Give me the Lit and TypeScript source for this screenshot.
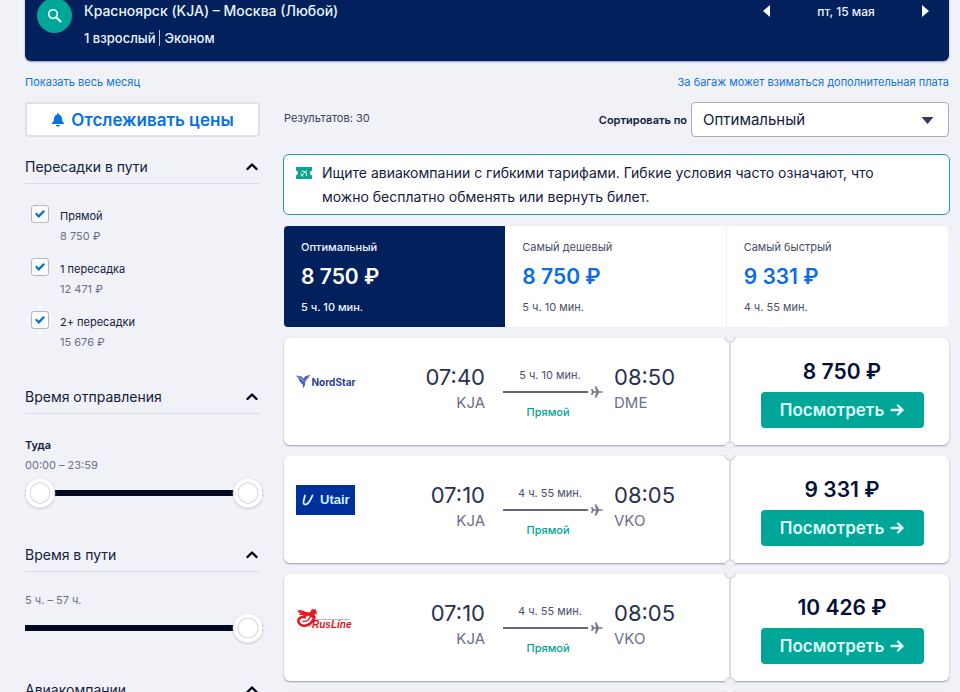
import { LitElement, html, css, svg, nothing } from "lit";
import { customElement, property, state } from "lit/decorators.js";
import { classMap } from "lit/directives/class-map.js";

interface Flight {
  airline: "nordstar" | "utair" | "rusline";
  depart: string;
  from: string;
  duration: string;
  arrive: string;
  to: string;
  price: string;
}

const FLIGHTS: Flight[] = [
  { airline: "nordstar", depart: "07:40", from: "KJA", duration: "5 ч. 10 мин.", arrive: "08:50", to: "DME", price: "8 750 ₽" },
  { airline: "utair", depart: "07:10", from: "KJA", duration: "4 ч. 55 мин.", arrive: "08:05", to: "VKO", price: "9 331 ₽" },
  { airline: "rusline", depart: "07:10", from: "KJA", duration: "4 ч. 55 мин.", arrive: "08:05", to: "VKO", price: "10 426 ₽" },
  { airline: "utair", depart: "07:10", from: "KJA", duration: "4 ч. 55 мин.", arrive: "08:05", to: "VKO", price: "10 426 ₽" },
];

const STOPS = [
  { id: "direct", label: "Прямой", price: "8 750 ₽" },
  { id: "one", label: "1 пересадка", price: "12 471 ₽" },
  { id: "more", label: "2+ пересадки", price: "15 676 ₽" },
];

const TABS = [
  { label: "Оптимальный", price: "8 750 ₽", time: "5 ч. 10 мин." },
  { label: "Самый дешевый", price: "8 750 ₽", time: "5 ч. 10 мин." },
  { label: "Самый быстрый", price: "9 331 ₽", time: "4 ч. 55 мин." },
];

const LOGOS = {
  nordstar: html`<svg class="logo" viewBox="0 0 60 30" role="img" aria-label="NordStar">
    ${svg`<path d="M0 8.500l5 .7 2.600 2.300L9.500 9l5.500-1.200-3 2.600 1.200.4-2.800 1.900.4.800-1.600 1.400-.3 3.500-1.700 2.800-.6-4-2.400-1.400 1.200-.3-3-1.700 1.400-.4z" fill="#4a63b8"/>
    <path d="M2 9.500l6 4.500M14 8.500l-5.500 6" stroke="#b8c6ea" stroke-width=".8"/>
    <text x="15.500" y="19" class="nord">NordStar</text>`}
  </svg>`,
  utair: html`<svg class="logo" viewBox="0 0 60 30" role="img" aria-label="Utair">
    ${svg`<path d="M0 0h59v30H0z" fill="#00309c"/>
    <path d="M9 10.500L7.700 15.500C6.900 18.700 8 19.800 10 19.400c2.800-.6 4.600-4.400 6.500-9" fill="none" stroke="#d4f2ff" stroke-width="1.800" stroke-linecap="round"/>
    <text x="24" y="19" class="utair">Utair</text>`}
  </svg>`,
  rusline: html`<svg class="logo" viewBox="0 0 60 30" role="img" aria-label="RusLine">
    ${svg`<path d="M1 6.500c4 .4 7 1.600 10.500 2.800 1.800.5 3-.2 3.700-1.300l-.6-1.500 1.600.5.600-1.500 1.300 1.300 1.600-1-.1 1.700 1.900.4-1.500 1.200 1.500 2.300-2.600-.6c-.8 1.400.6 3.200.4 5.600" fill="#e01b22"/>
    <path d="M2.500 8.500l9 3.200M4 11l7 1.800" stroke="#e01b22" stroke-width="1.500" stroke-linecap="round"/>
    <path d="M9 14.200c-4-.8-7 1-6.700 4 .4 3.200 4 5.200 7.800 4.300 4-1 7-4.200 8.400-8.500" fill="none" stroke="#e01b22" stroke-width="2.600" stroke-linecap="round"/>
    <path d="M7 18.500c3.500.3 6-1.800 7.500-5" fill="none" stroke="#e01b22" stroke-width="1.300" stroke-linecap="round"/>
    <path d="M20 16.500h35" stroke="#b9b2b4" stroke-width="1" stroke-dasharray="5 .6"/>
    <text x="16" y="25" class="rus">RusLine</text>`}
  </svg>`,
};

@customElement("filter-section")
export class FilterSection extends LitElement {
  @property() heading = "";
  @state() private open = true;

  static styles = css`
    :host { display: block; }
    h3 { margin: 0; font: inherit; }
    .head {
      display: flex;
      align-items: center;
      justify-content: space-between;
      width: 100%;
      height: 32px;
      padding: 0 2px 2px 0;
      border: 0;
      border-bottom: 1px solid #d9dde3;
      background: none;
      color: #14203c;
      font: 400 14px/20px Inter, "Liberation Sans", sans-serif;
      text-align: left;
      cursor: pointer;
    }
    .chevron { width: 12px; height: 8px; }
    .closed { transform: rotate(180deg); }
  `;

  render() {
    return html`
      <h3>
        <button class="head" aria-expanded=${this.open} @click=${() => (this.open = !this.open)}>
          ${this.heading}
          <svg class=${classMap({ chevron: true, closed: !this.open })} viewBox="0 0 12 8" aria-hidden="true">
            <path d="M1.500 6L6 1.500 10.500 6" fill="none" stroke="#05081f" stroke-width="2.400" stroke-linecap="round" stroke-linejoin="round" />
          </svg>
        </button>
      </h3>
      ${this.open ? html`<slot></slot>` : nothing}
    `;
  }
}

@customElement("flight-card")
export class FlightCard extends LitElement {
  @property({ attribute: false }) flight!: Flight;

  static styles = css`
    :host { display: block; }
    .card {
      display: grid;
      grid-template-columns: minmax(0, 1fr) 220px;
      min-height: 107px;
      border-radius: 6px;
      background: #fff;
      box-shadow: 0 1px 2px #9a9da6;
    }
    .leg {
      display: flex;
      align-items: flex-start;
      padding: 26px 54px 0 12px;
    }
    .logo { width: 60px; height: 30px; margin-top: 3px; }
    .nord { font: 700 10px Inter, sans-serif; fill: #2c3e94; }
    .utair { font: 700 13px "Liberation Sans", sans-serif; fill: #d4f2ff; }
    .rus { font: italic 700 10px "Liberation Sans", sans-serif; fill: #d8151d; }
    .stop { display: flex; flex-direction: column; width: 61px; }
    .depart { flex: 1; align-items: flex-end; }
    .time { color: #2a3050; font-size: 22px; line-height: 26px; }
    .code { color: #6b6f88; font-size: 15px; line-height: 26px; }
    .route {
      display: flex;
      flex-direction: column;
      width: 100px;
      margin: 0 11px 0 18px;
      font-size: 11px;
    }
    .duration { width: 94px; color: #4a4f68; line-height: 22px; text-align: center; }
    .path { display: flex; align-items: center; gap: 3px; height: 12px; }
    .line { flex: 1; height: 2px; background: #67667c; }
    .plane { width: 12px; height: 12px; }
    .direct { width: 90px; color: #00a38f; font-weight: 500; line-height: 28px; text-align: center; }
    .offer {
      position: relative;
      display: flex;
      flex-direction: column;
      align-items: center;
      padding: 20px 0 0 4px;
      border-left: 2px solid #dcdde2;
    }
    .notch {
      position: absolute;
      left: -7px;
      width: 12px;
      height: 6px;
      box-sizing: border-box;
      border: 2px solid #dcdde2;
      background: #f0f2f6;
    }
    .top { top: -1px; border-top: 0; border-radius: 0 0 6px 6px; }
    .bottom { bottom: -2px; border-bottom: 0; border-radius: 6px 6px 0 0; }
    .price { color: #05103a; font-size: 21px; font-weight: 600; line-height: 28px; }
    .go {
      display: flex;
      align-items: center;
      justify-content: center;
      gap: 6px;
      width: 163px;
      height: 36px;
      margin-top: 6px;
      padding: 0;
      border: 0;
      border-radius: 4px;
      background: #00a698;
      color: #dffcf6;
      font: 600 17px/24px Inter, "Liberation Sans", sans-serif;
      cursor: pointer;
    }
    .arrow { width: 14px; height: 14px; }
  `;

  render() {
    const f = this.flight;
    return html`
      <article class="card">
        <div class="leg">
          ${LOGOS[f.airline]}
          <div class="stop depart"><span class="time">${f.depart}</span><span class="code">${f.from}</span></div>
          <div class="route">
            <span class="duration">${f.duration}</span>
            <span class="path">
              <span class="line"></span>
              <svg class="plane" viewBox="0 0 12 12" aria-hidden="true">
                <path d="M0 3l1.500 0L2.800 5.200H5L3.800.3H5.200L8 5.200h2.600Q12 5.400 12 6T10.600 6.800H8L5.200 11.700H3.800L5 6.800H2.800L1.500 9H0L.9 6z" fill="#77768a" />
              </svg>
            </span>
            <span class="direct">Прямой</span>
          </div>
          <div class="stop"><span class="time">${f.arrive}</span><span class="code">${f.to}</span></div>
        </div>
        <div class="offer">
          <span class="notch top"></span>
          <span class="notch bottom"></span>
          <span class="price">${f.price}</span>
          <button class="go">
            Посмотреть
            <svg class="arrow" viewBox="0 0 14 14" aria-hidden="true">
              <path d="M1.500 7h11M8 2.500L12.500 7 8 11.500" fill="none" stroke="currentColor" stroke-width="2.400" stroke-linecap="round" stroke-linejoin="round" />
            </svg>
          </button>
        </div>
      </article>
    `;
  }
}

@customElement("app-root")
export class AppRoot extends LitElement {
  @state() private tab = 0;

  static styles = css`
    :host {
      display: block;
      height: 100vh;
      overflow: hidden auto;
      scrollbar-width: none;
      background: #f0f2f7;
      color: #14203c;
      font-family: Inter, "Liberation Sans", sans-serif;
    }
    * { box-sizing: border-box; }
    button { font-family: inherit; cursor: pointer; }
    .page { padding: 0 11px 0 25px; }

    .search {
      display: flex;
      align-items: flex-start;
      margin-top: -20px;
      padding: 18px 20px 9px 12px;
      border-radius: 6px;
      background: #02205c;
      box-shadow: 0 1px 2px #8b9cc0;
      color: #e9f5ff;
    }
    .find {
      display: grid;
      place-items: center;
      width: 35px;
      height: 35px;
      padding: 0;
      border: 0;
      border-radius: 50%;
      background: #00a698;
    }
    .glass { width: 15px; height: 15px; }
    .trip { flex: 1; margin-left: 12px; font-weight: 500; }
    .cities { font-size: 14px; line-height: 26px; }
    .pax { display: flex; align-items: center; gap: 4px; font-size: 13px; line-height: 28px; }
    .bar { width: 1px; height: 16px; background: #b9c8e0; }
    .dates {
      display: flex;
      align-items: center;
      justify-content: space-between;
      width: 166px;
      height: 26px;
      font-size: 12px;
      font-weight: 500;
    }
    .step { display: flex; padding: 0; border: 0; background: none; }
    .tri { width: 7px; height: 12px; }

    .links { display: flex; align-items: center; justify-content: space-between; height: 41px; }
    .link { color: #1474d4; font-size: 11px; line-height: 16px; text-decoration: none; }

    .columns { display: grid; grid-template-columns: 235px minmax(0, 1fr); gap: 24px; }
    .track {
      display: flex;
      align-items: center;
      justify-content: center;
      gap: 6px;
      width: 100%;
      height: 35px;
      margin-bottom: 15px;
      padding: 0;
      border: 2px solid #dde1e7;
      border-radius: 4px;
      background: #fff;
      color: #0770e3;
      font-size: 17px;
      font-weight: 600;
    }
    .bell { width: 14px; height: 14px; }

    .stops { padding: 21px 0 18px; }
    .check { display: grid; grid-template-columns: 18px 1fr; column-gap: 11px; height: 53px; padding-left: 6px; align-content: start; }
    .box {
      appearance: none;
      display: grid;
      place-items: center;
      width: 18px;
      height: 18px;
      margin: 0;
      border: 1px solid #b4b7c2;
      border-radius: 3px;
      background: #fff;
    }
    .box:checked::before {
      content: "";
      width: 10px;
      height: 8px;
      background: #0a6fd0;
      clip-path: polygon(0 50%, 16% 32%, 36% 58%, 84% 0, 100% 18%, 38% 100%);
    }
    .name { display: block; font-size: 11px; line-height: 22px; }
    .sum { display: block; color: #6b6f88; font-size: 11px; line-height: 18px; }

    .times { padding: 21px 0 32px; }
    .total { padding: 18px 0 32px; }
    .when { margin: 0; font-size: 11px; font-weight: 600; line-height: 20px; }
    .span { display: block; color: #6b6f88; font-size: 11px; line-height: 20px; }
    .slider { position: relative; height: 30px; margin: 3px -3px 0 0; }
    .range {
      appearance: none;
      display: block;
      width: 100%;
      height: 30px;
      margin: 0;
      background: linear-gradient(#020822, #020822) center / 100% 6px no-repeat;
    }
    .over { position: absolute; inset: 0; background: none; pointer-events: none; }
    .range::-webkit-slider-thumb {
      appearance: none;
      width: 30px;
      height: 30px;
      border: 0;
      border-radius: 50%;
      background: radial-gradient(circle, #fff 9px, #d3d6dc 10px, #fff 11px);
      box-shadow: inset 0 0 1px #b4b8c2, 0 1px 2px #c2c5cd;
      pointer-events: auto;
    }

    .toolbar { display: flex; align-items: center; height: 35px; }
    .count { flex: 1; align-self: flex-start; color: #3a4058; font-size: 11px; line-height: 32px; }
    .sort { margin-right: 4px; font-size: 11px; font-weight: 600; }
    .picker { position: relative; width: 258px; }
    .select {
      appearance: none;
      display: block;
      width: 100%;
      height: 35px;
      padding: 0 11px;
      border: 1px solid #a9adb8;
      border-radius: 4px;
      background: #fff;
      color: #14203c;
      font: 400 15px/20px Inter, "Liberation Sans", sans-serif;
    }
    .caret { position: absolute; right: 15px; top: 15px; width: 13px; height: 7px; pointer-events: none; }

    .notice {
      display: flex;
      gap: 10px;
      margin: 17px -1px 11px;
      padding: 6px 40px 5px 12px;
      border: 1px solid #1aa595;
      border-radius: 6px;
      background: #fff;
      font-size: 14px;
      line-height: 24px;
    }
    .notice p { margin: 0; }
    .ticket { flex: none; width: 16px; height: 12px; margin-top: 6px; }

    .tabs { display: grid; grid-template-columns: repeat(3, 1fr); margin: 0 1px 11px 0; border-radius: 4px; overflow: hidden; }
    .tab {
      display: flex;
      flex-direction: column;
      height: 101px;
      padding: 11px 17px;
      border: 0;
      border-right: 1px solid #eceef2;
      background: #fff;
      color: #4a4f63;
      font-size: 11px;
      line-height: 20px;
      text-align: left;
    }
    .tab:last-child { border-right: 0; }
    .best { color: #0c6ce0; font-size: 21px; font-weight: 600; line-height: 40px; }
    .on { border-right: 0; background: #02205c; color: #eef6ff; font-weight: 500; }
    .on .best { color: #fff; }
    .results { display: grid; gap: 11px; padding-bottom: 24px; }
  `;

  private range(value: number, label: string, over = false) {
    return html`<input class=${classMap({ range: true, over })} type="range" min="0" max="100" .value=${String(value)} aria-label=${label} />`;
  }

  render() {
    return html`
      <div class="page">
        <header class="search">
          <button class="find" aria-label="Изменить поиск">
            <svg class="glass" viewBox="0 0 15 15" aria-hidden="true">
              <circle cx="6" cy="6" r="4.300" fill="none" stroke="#dffcf6" stroke-width="1.700" />
              <path d="M9.200 9.200L13.500 13.500" stroke="#dffcf6" stroke-width="2.200" stroke-linecap="round" />
            </svg>
          </button>
          <div class="trip">
            <div class="cities">Красноярск (KJA) – Москва (Любой)</div>
            <div class="pax"><span>1 взрослый</span><span class="bar"></span><span>Эконом</span></div>
          </div>
          <nav class="dates" aria-label="Дата">
            <button class="step" aria-label="Предыдущий день">
              <svg class="tri" viewBox="0 0 7 12"><path d="M7 0v12L0 6z" fill="#fff" /></svg>
            </button>
            <span>пт, 15 мая</span>
            <button class="step" aria-label="Следующий день">
              <svg class="tri" viewBox="0 0 7 12"><path d="M0 0v12l7-6z" fill="#fff" /></svg>
            </button>
          </nav>
        </header>

        <div class="links">
          <a class="link" href="#month">Показать весь месяц</a>
          <a class="link" href="#baggage">За багаж может взиматься дополнительная плата</a>
        </div>

        <div class="columns">
          <aside>
            <button class="track">
              <svg class="bell" viewBox="0 0 14 14" aria-hidden="true">
                <path d="M7 .5c.8 0 1.200.5 1.300 1.200C10.600 2.300 11 4.500 11.200 7c.1 1.300.6 2 1.600 2.700.6.500.3 1.300-.4 1.300H1.600c-.7 0-1-.8-.4-1.300C2.200 9 2.700 8.300 2.800 7c.2-2.500.6-4.700 2.900-5.300C5.800 1 6.200.5 7 .5zM4.800 12h4.400c-.3 1-1.200 1.600-2.200 1.600S5.100 13 4.800 12z" fill="currentColor" />
              </svg>
              Отслеживать цены
            </button>

            <filter-section heading="Пересадки в пути">
              <div class="stops">
                ${STOPS.map(
                  (s) => html`<div class="check">
                    <input class="box" type="checkbox" id=${s.id} checked />
                    <label for=${s.id}><span class="name">${s.label}</span><span class="sum">${s.price}</span></label>
                  </div>`
                )}
              </div>
            </filter-section>

            <filter-section heading="Время отправления">
              <div class="times">
                <h4 class="when">Туда</h4>
                <span class="span">00:00 – 23:59</span>
                <div class="slider">${this.range(0, "Вылет не раньше")}${this.range(100, "Вылет не позже", true)}</div>
              </div>
            </filter-section>

            <filter-section heading="Время в пути">
              <div class="total">
                <span class="span">5 ч. – 57 ч.</span>
                <div class="slider">${this.range(100, "Время в пути")}</div>
              </div>
            </filter-section>

            <filter-section heading="Авиакомпании"></filter-section>
          </aside>

          <main>
            <div class="toolbar">
              <span class="count">Результатов: 30</span>
              <label class="sort" for="sort">Сортировать по</label>
              <div class="picker">
                <select class="select" id="sort">
                  <option>Оптимальный</option>
                  <option>Самый дешевый</option>
                  <option>Самый быстрый</option>
                </select>
                <svg class="caret" viewBox="0 0 13 7" aria-hidden="true"><path d="M.5 0h12L6.500 7z" fill="#38345a" /></svg>
              </div>
            </div>

            <div class="notice">
              <svg class="ticket" viewBox="0 0 16 12" aria-hidden="true">
                <path d="M0 0h16v3.500c-1.500.5-2 1.500-2 2.500s.5 2 2 2.500V12H0V8.500C1.500 8 2 7 2 6s-.5-2-2-2.500z" fill="#0aa592" />
                <path d="M4.800 9.200L11 3M5.500 4l4.500.8.600 4.200M4.500 7l2 .5.500 2" fill="none" stroke="#e8fffa" stroke-width="1" />
              </svg>
              <p>Ищите авиакомпании с гибкими тарифами. Гибкие условия часто означают, что можно бесплатно обменять или вернуть билет.</p>
            </div>

            <div class="tabs">
              ${TABS.map(
                (t, i) => html`<button class=${classMap({ tab: true, on: i === this.tab })} @click=${() => (this.tab = i)}>
                  <span>${t.label}</span><span class="best">${t.price}</span><span>${t.time}</span>
                </button>`
              )}
            </div>

            <div class="results">${FLIGHTS.map((f) => html`<flight-card .flight=${f}></flight-card>`)}</div>
          </main>
        </div>
      </div>
    `;
  }
}
